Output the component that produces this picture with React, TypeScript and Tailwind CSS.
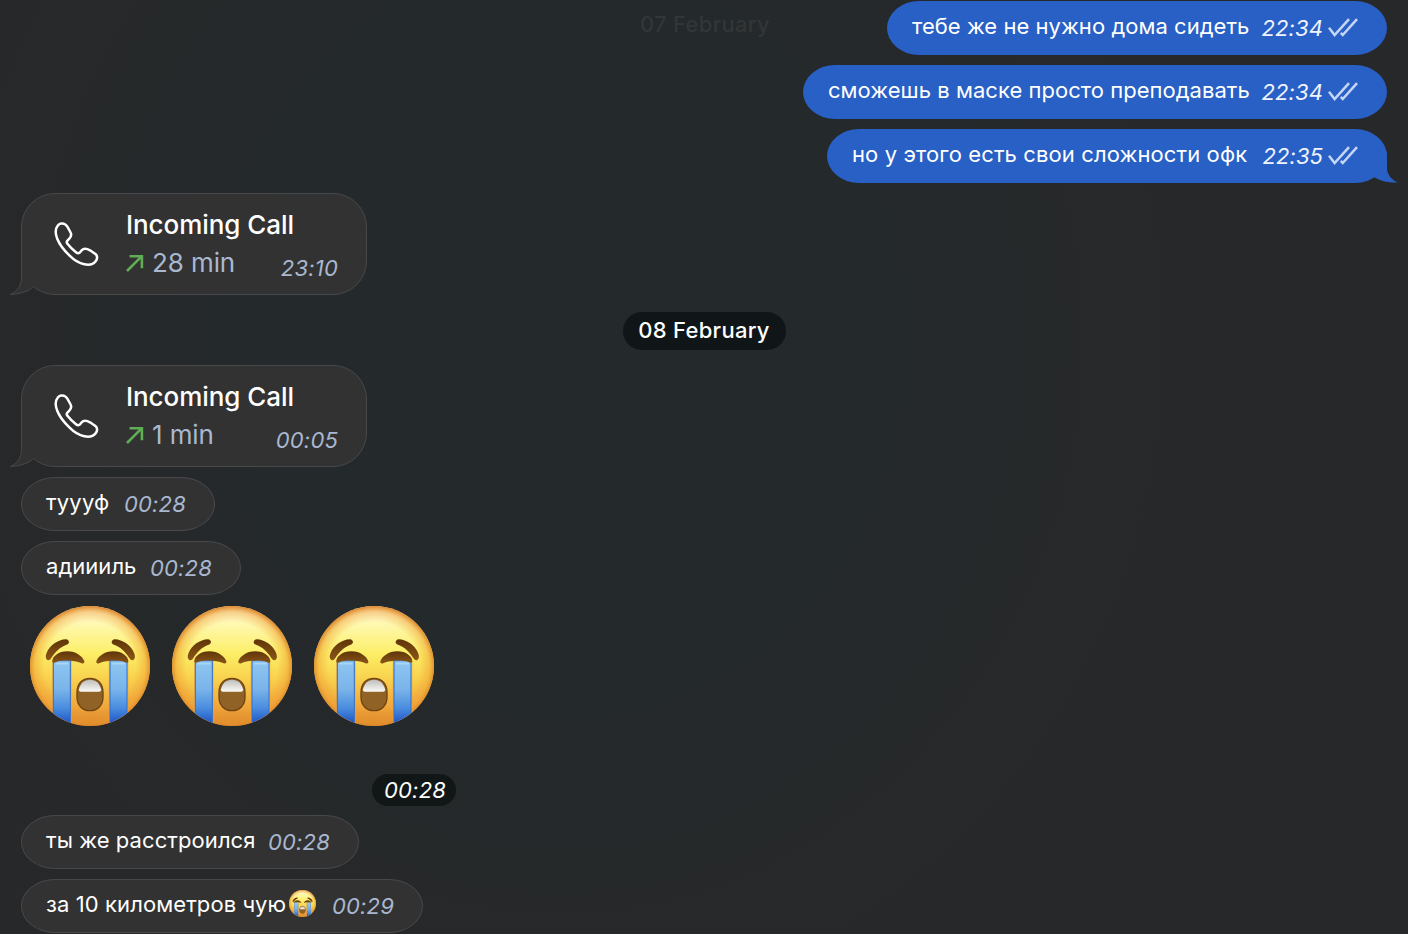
import { useId } from "react";

function CryingFace({ className }: { className: string }) {
  const id = useId().replace(/[^a-zA-Z0-9]/g, "");
  const u = (n: string) => `url(#${id}${n})`;
  return (
    <svg viewBox="30 33 360 360" className={className} role="img" aria-label="😭">
      <defs>
        <linearGradient id={`${id}face`} x1="0" y1="0" x2="0" y2="1">
          <stop offset="0" stopColor="#fffbe0" />
          <stop offset="0.18" stopColor="#fef7a6" />
          <stop offset="0.4" stopColor="#fcee66" />
          <stop offset="0.6" stopColor="#f9d24e" />
          <stop offset="0.85" stopColor="#efa43a" />
          <stop offset="1" stopColor="#d58128" />
        </linearGradient>
        <radialGradient id={`${id}rim`} cx="0.5" cy="0.51" r="0.51">
          <stop offset="0.74" stopColor="#ee9a30" stopOpacity="0" />
          <stop offset="0.9" stopColor="#ee9c32" stopOpacity="0.45" />
          <stop offset="1" stopColor="#d97f22" stopOpacity="0.95" />
        </radialGradient>
        <linearGradient id={`${id}tear`} gradientUnits="userSpaceOnUse" x1="0" y1="197" x2="0" y2="385">
          <stop offset="0" stopColor="#8fc6f0" />
          <stop offset="0.45" stopColor="#7ab4ea" />
          <stop offset="0.75" stopColor="#4b8edf" />
          <stop offset="1" stopColor="#1f55c6" />
        </linearGradient>
        <linearGradient id={`${id}teeth`} x1="0" y1="0" x2="0" y2="1">
          <stop offset="0" stopColor="#bdbdbb" />
          <stop offset="1" stopColor="#fbfaf7" />
        </linearGradient>
        <linearGradient id={`${id}brow`} x1="0" y1="0" x2="0" y2="1">
          <stop offset="0" stopColor="#5f3508" />
          <stop offset="1" stopColor="#8a5518" />
        </linearGradient>
        <clipPath id={`${id}clip`}>
          <circle cx="210" cy="213" r="180" />
        </clipPath>
      </defs>
      <circle cx="210" cy="213" r="180" fill={u("face")} />
      <circle cx="210" cy="213" r="180" fill={u("rim")} />
      <g clipPath={u("clip")}>
        <rect x="96" y="196" width="59" height="200" fill="#f0a233" opacity="0.6" />
        <rect x="266" y="196" width="59" height="200" fill="#f0a233" opacity="0.6" />
        <rect x="100" y="197" width="51" height="200" fill={u("tear")} stroke="#2f6fd0" strokeWidth="3" />
        <rect x="270" y="197" width="51" height="200" fill={u("tear")} stroke="#2f6fd0" strokeWidth="3" />
        <path d="M106 206H145M276 206H315" stroke="#a9d6f6" strokeWidth="5" />
      </g>
      <g fill={u("brow")}>
        <path d="M82 195C76 191 76 182 80 173C89 151 114 134 138 133C149 134 150 147 140 149C120 156 106 170 94 189C90 195 86 197 82 195Z" />
        <path d="M340 195C346 191 346 182 342 173C333 151 308 134 284 133C273 134 272 147 282 149C302 156 316 170 328 189C332 195 336 197 340 195Z" />
        <path d="M97 199C97 184 116 169 142 169C168 169 188 184 193 199C194 206 188 207 183 204C166 196 124 193 109 201C102 205 97 204 97 199Z" />
        <path d="M325 199C325 184 306 169 280 169C254 169 234 184 229 199C228 206 234 207 239 204C256 196 298 193 313 201C320 205 325 204 325 199Z" />
      </g>
      <path
        d="M210 250C186 250 171 267 171 292V307C171 331 187 347 210 347C233 347 249 331 249 307V292C249 267 234 250 210 250Z"
        fill="#916226"
        stroke="#6e4412"
        strokeWidth="4"
      />
      <path d="M210 254C192 254 181 265 177 283C176 288 178 290 183 290H237C242 290 244 288 243 283C239 265 228 254 210 254Z" fill={u("teeth")} />
    </svg>
  );
}

function Phone() {
  return (
    <svg viewBox="161 108 138 138" className="h-[46px] w-[46px] shrink-0" fill="none" stroke="#fff" strokeWidth="7.5" strokeLinejoin="round">
      <path d="M194 118C187 113 177 115 172 122C164 132 165 147 171 162C178 179 190 195 207 211C222 226 238 235 252 238C266 241 279 238 286 229C292 221 292 211 284 206L269 196C259 190 250 189 244 196L240 201C236 206 232 206 226 201C217 194 209 186 202 177C198 173 198 170 202 166L207 161C213 155 214 148 210 141L201 125C199 122 197 120 194 118Z" />
    </svg>
  );
}

function Checks() {
  return (
    <svg viewBox="0 0 30 20" className="mt-0.5 h-5 w-[30px] shrink-0" fill="none" stroke="#c5d6f5" strokeWidth="2.5">
      <path d="M1 9.8L6.6 17L21 1.2" />
      <path d="M12.8 14.8L14.8 17L29 1.2" />
    </svg>
  );
}

function Sent({ text, time, className, textClass, tail }: { text: string; time: string; className: string; textClass: string; tail?: boolean }) {
  return (
    <div className={`relative flex h-[54px] items-center self-end bg-[#2860c5] pb-0.5 pl-[25px] pr-[29px] rounded-[32px/27px] ${className}`}>
      <span className={`pb-[3px] text-[22px] leading-[28px] text-white ${textClass}`}>{text}</span>
      <span className="ml-auto pr-[5px] pt-px text-[22px] italic leading-[28px] tracking-[0.1px] text-[#eef3fd]">{time}</span>
      <Checks />
      {tail && (
        <svg viewBox="0 0 50 40" className="absolute -right-3 bottom-0 h-10 w-[50px]" fill="#2860c5">
          <path d="M38 10V25C38 32 43 37 49 39.5C40 40 31 38 25 34L18 20L32 5Z" />
        </svg>
      )}
    </div>
  );
}

function Received({ text, time, className, textClass, face }: { text: string; time: string; className: string; textClass: string; face?: boolean }) {
  return (
    <div className={`flex h-[54px] items-center border border-[#47484c] bg-[#323232] pb-0.5 pl-6 pr-7 rounded-[34px/27px] ${className}`}>
      <span className={`pb-[3px] text-[22px] leading-[28px] text-white ${textClass}`}>{text}</span>
      {face && <CryingFace className="mb-[3px] ml-[3px] h-[27px] w-[27px] shrink-0" />}
      <span className="ml-auto pt-px text-[22px] italic leading-[28px] tracking-[0.2px] text-[#a9b8d0]">{time}</span>
    </div>
  );
}

function Call({ duration, time, className }: { duration: string; time: string; className: string }) {
  return (
    <div className={`relative flex h-[102px] w-[346px] rounded-[34px] border border-[#47484c] bg-[#323232] pl-8 pr-7 pt-[27px] ${className}`}>
      <svg viewBox="0 0 50 40" className="absolute -bottom-px -left-[13px] h-10 w-[50px]" fill="none">
        <path d="M12.5 4V22C12.5 30 9 36 1.5 39.5C12 39 20 36 24.5 31.5L38 22V4Z" fill="#323232" />
        <path d="M12.5 4V22C12.5 30 9 36 1.5 39.5C12 39 20 36 24.5 31.5" stroke="#47484c" />
      </svg>
      <Phone />
      <div className="-mt-[14px] ml-[26px] flex grow flex-col">
        <span className="text-[26px] font-medium leading-[36px] tracking-[-0.05px] text-white">Incoming Call</span>
        <div className="flex items-center pt-px">
          <svg viewBox="0 0 18 18" className="h-[18px] w-[18px]" fill="none" stroke="#5fae55" strokeWidth="2.6">
            <path d="M1 17L15.6 2.4M3.6 2.3H15.9V14.2" />
          </svg>
          <span className="ml-2 text-[26px] leading-[38px] tracking-[-0.1px] text-[#a9b8d0]">{duration}</span>
          <span className="ml-auto pt-2.5 text-[22px] italic leading-[28px] tracking-[0.2px] text-[#a9b8d0]">{time}</span>
        </div>
      </div>
    </div>
  );
}

export default function App() {
  return (
    <main className="flex h-[934px] w-[1408px] flex-col overflow-hidden whitespace-nowrap bg-[#272829] bg-[radial-gradient(ellipse_620px_680px_at_560px_340px,#24292b_0%,#24292b_50%,transparent_100%)] pl-[21px] pr-[21px] pt-px font-['Inter','Noto_Sans',sans-serif]">
      <div className="relative flex flex-col gap-[10px]">
        <span className="absolute left-[619px] top-[9px] text-[22px] font-medium leading-[28px] tracking-[0.3px] text-[#323637]">07 February</span>
        <Sent text="тебе же не нужно дома сидеть" time="22:34" className="w-[500px]" textClass="tracking-[0.04px]" />
        <Sent text="сможешь в маске просто преподавать" time="22:34" className="w-[584px]" textClass="tracking-[0.04px]" />
        <Sent text="но у этого есть свои сложности офк" time="22:35" className="w-[560px]" textClass="tracking-[0.11px]" tail />
      </div>
      <Call duration="28 min" time="23:10" className="mt-[10px]" />
      <div className="mt-[17px] flex h-[38px] w-[163px] items-center justify-center self-center rounded-[19px] bg-[#101518] pb-0.5 text-[22px] font-medium tracking-[0.3px] text-white">
        08 February
      </div>
      <Call duration="1 min" time="00:05" className="mt-[15px]" />
      <Received text="туууф" time="00:28" className="mt-[10px] w-[194px]" textClass="tracking-[0.2px]" />
      <Received text="адиииль" time="00:28" className="mt-[10px] w-[220px]" textClass="tracking-[0.04px]" />
      <div className="mt-[11px] flex gap-[22px] pl-[9px]">
        <CryingFace className="h-[120px] w-[120px]" />
        <CryingFace className="h-[120px] w-[120px]" />
        <CryingFace className="h-[120px] w-[120px]" />
      </div>
      <div className="ml-[351px] mt-12 flex h-8 w-[84px] items-center justify-center rounded-[16px] bg-[#101716] pl-0.5 text-[22px] italic tracking-[0.2px] text-white">00:28</div>
      <Received text="ты же расстроился" time="00:28" className="mt-[9px] w-[338px]" textClass="tracking-[0.08px]" />
      <Received text="за 10 километров чую" time="00:29" className="mt-[10px] w-[402px]" textClass="tracking-[0.1px]" face />
    </main>
  );
}
